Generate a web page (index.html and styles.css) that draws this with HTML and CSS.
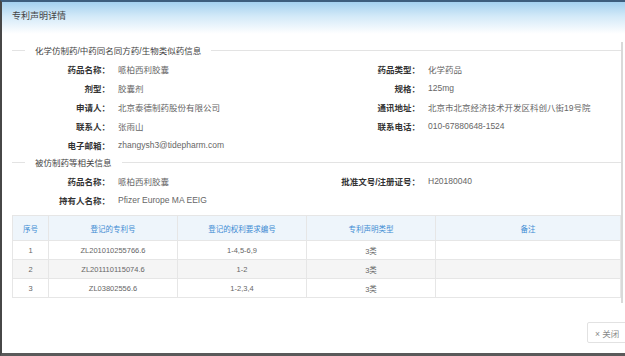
FILE: index.html
```html
<!DOCTYPE html>
<html lang="zh-CN">
<head>
    <meta charset="UTF-8">
    <title>专利声明详情</title>
    <link rel="stylesheet" href="styles.css">
</head>
<body>

    <div class="modal">
        <div class="modal-header">专利声明详情</div>

        <div class="modal-body">
            <!-- 化学仿制药信息 -->
            <div class="legend"><span>化学仿制药/中药同名同方药/生物类似药信息</span></div>
            <div class="info-grid">
                <div class="label">药品名称：</div><div class="value">哌柏西利胶囊</div>
                <div class="label">药品类型：</div><div class="value">化学药品</div>

                <div class="label">剂型：</div><div class="value">胶囊剂</div>
                <div class="label">规格：</div><div class="value">125mg</div>

                <div class="label">申请人：</div><div class="value">北京泰德制药股份有限公司</div>
                <div class="label">通讯地址：</div><div class="value">北京市北京经济技术开发区科创八街19号院</div>

                <div class="label">联系人：</div><div class="value">张雨山</div>
                <div class="label">联系电话：</div><div class="value">010-67880648-1524</div>

                <div class="label">电子邮箱：</div><div class="value">zhangysh3@tidepharm.com</div>
            </div>

            <!-- 被仿制药信息 -->
            <div class="legend legend-second"><span>被仿制药等相关信息</span></div>
            <div class="info-grid">
                <div class="label">药品名称：</div><div class="value">哌柏西利胶囊</div>
                <div class="label">批准文号/注册证号：</div><div class="value">H20180040</div>

                <div class="label">持有人名称：</div><div class="value">Pfizer Europe MA EEIG</div>
            </div>

            <table class="patent-table">
                <thead>
                    <tr>
                        <th class="col-no">序号</th>
                        <th class="col-mid">登记的专利号</th>
                        <th class="col-mid">登记的权利要求编号</th>
                        <th class="col-mid">专利声明类型</th>
                        <th>备注</th>
                    </tr>
                </thead>
                <tbody>
                    <tr><td>1</td><td>ZL201010255766.6</td><td>1-4,5-6,9</td><td>3类</td><td></td></tr>
                    <tr><td>2</td><td>ZL201110115074.6</td><td>1-2</td><td>3类</td><td></td></tr>
                    <tr><td>3</td><td>ZL03802556.6</td><td>1-2,3,4</td><td>3类</td><td></td></tr>
                </tbody>
            </table>
        </div>

        <div class="modal-footer">
            <button class="btn-close">× 关闭</button>
        </div>
    </div>

</body>
</html>
```

FILE: styles.css
```css
html, body {
    margin: 0;
    padding: 0;
    overflow: hidden;
}

body {
    font-family: "Liberation Sans", "Noto Sans CJK SC", sans-serif;
    font-size: 8.5px;
    color: #555;
    background: #fff;
}

.modal {
    width: 625px;
    height: 356px;
    box-sizing: border-box;
    display: flex;
    flex-direction: column;
    border-top: 2px solid #3d5d7d;
    border-left: 2px solid #474747;
    border-bottom: 3px solid #5a5a5a;
    overflow: hidden;
}

.modal-header {
    height: 40px;
    line-height: 28px;
    padding-left: 10px;
    font-size: 9px;
    color: #444;
    background: linear-gradient(#a4d0ef, #d2e9f8 35%, #fff 80%);
}

.modal-body {
    height: 261px;
    margin-right: 2px;
    padding-left: 10px;
    border-right: 2px solid #d9d9d9;
}

.legend {
    display: flex;
    align-items: center;
    height: 14px;
    margin-top: 1px;
    margin-bottom: 2px;
    color: #444;
}

.legend-second {
    margin-top: 1px;
}

.legend::before {
    content: '';
    width: 13px;
    height: 1px;
    background-color: #e3e3e3;
}

.legend::after {
    content: '';
    flex: 1;
    height: 1px;
    background-color: #e3e3e3;
}

.legend span {
    padding: 0 10px;
}

.info-grid {
    display: grid;
    grid-template-columns: 98px 208px 102px 1fr;
    grid-auto-rows: 19px;
    align-items: center;
}

.label {
    text-align: right;
    color: #333;
    font-weight: bold;
}

.value {
    padding-left: 8px;
    color: #666;
    white-space: nowrap;
}

.patent-table {
    width: 100%;
    margin-top: 6px;
    border-collapse: collapse;
    font-size: 7.5px;
    text-align: center;
}

.patent-table th,
.patent-table td {
    border: 1px solid #e6e6e6;
    padding: 0;
    font-weight: normal;
}

.patent-table th {
    height: 24px;
    background-color: #eef5fb;
    color: #3d8bd3;
}

.patent-table td {
    height: 18px;
    color: #666;
}

.patent-table tbody tr:nth-child(2) {
    background-color: #f5f5f5;
}

.col-no {
    width: 35px;
}

.col-mid {
    width: 128px;
}

.modal-footer {
    flex: 1;
    display: flex;
    justify-content: flex-end;
    align-items: flex-end;
    padding-bottom: 10px;
}

.btn-close {
    width: 46px;
    height: 21px;
    margin-right: -8px;
    padding: 0 0 0 7px;
    text-align: left;
    font-family: inherit;
    font-size: 8.5px;
    color: #888;
    background: #fff;
    border: 1px solid #e2e2e2;
    border-radius: 2px;
}
```
